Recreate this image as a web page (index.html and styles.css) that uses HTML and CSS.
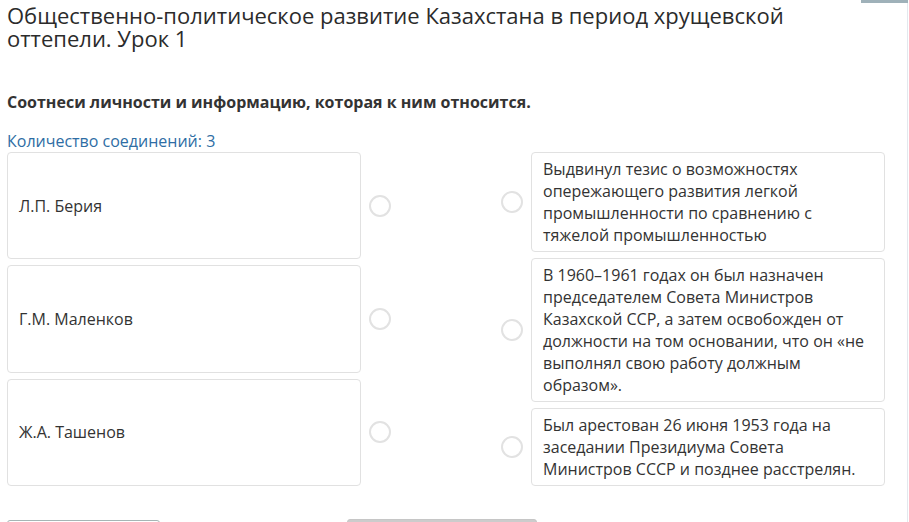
FILE: index.html
```
<!DOCTYPE html>
<html lang="ru">
<head>
<meta charset="utf-8">
<link rel="stylesheet" href="styles.css">
</head>
<body>
<div class="page">
  <div class="top-tab"></div>
  <h1 class="title">Общественно-политическое развитие Казахстана в период хрущевской оттепели. Урок 1</h1>
  <p class="task">Соотнеси личности и информацию, которая к ним относится.</p>
  <p class="count">Количество соединений: 3</p>
  <div class="match">
    <div class="col col-left">
      <div class="row"><div class="card card-left">Л.П. Берия</div><span class="dot"></span></div>
      <div class="row"><div class="card card-left">Г.М. Маленков</div><span class="dot"></span></div>
      <div class="row"><div class="card card-left">Ж.А. Ташенов</div><span class="dot"></span></div>
    </div>
    <div class="col col-right">
      <div class="row"><span class="dot"></span><div class="card card-right">Выдвинул тезис о возможностях опережающего развития легкой промышленности по сравнению с тяжелой промышленностью</div></div>
      <div class="row"><span class="dot"></span><div class="card card-right">В 1960–1961 годах он был назначен председателем Совета Министров Казахской ССР, а затем освобожден от должности на том основании, что он «не выполнял свою работу должным образом».</div></div>
      <div class="row"><span class="dot"></span><div class="card card-right">Был арестован 26 июня 1953 года на заседании Президиума Совета Министров СССР и позднее расстрелян.</div></div>
    </div>
  </div>
  <div class="buttons">
    <button class="btn btn-outline"></button>
    <button class="btn btn-grey"></button>
  </div>
</div>
</body>
</html>
```
FILE: styles.css
```
html, body {
  margin: 0;
  padding: 0;
  background: #fff;
}
body {
  font-family: "Open Sans", "Noto Sans", sans-serif;
  color: #333;
  overflow: hidden;
}
.page {
  position: relative;
  width: 900px;
  min-height: 600px;
  padding-left: 7px;
  border-right: 1px solid #e3e8ee;
}
.top-tab {
  position: absolute;
  right: -1px;
  top: 0;
  width: 47px;
  height: 3px;
  background: #9fb1b9;
}
.title {
  margin: 0;
  padding-top: 4px;
  font-size: 22px;
  line-height: 23px;
  font-weight: 400;
  color: #2b2b2b;
  width: 820px;
}
.task {
  margin: 42px 0 0;
  font-size: 16px;
  line-height: 20px;
  font-weight: 700;
  color: #333;
}
.count {
  margin: 19px 0 0;
  font-size: 16px;
  line-height: 20px;
  color: #2e6da4;
}
.match {
  display: grid;
  grid-template-columns: 384px 384px;
  column-gap: 110px;
  margin-top: 1px;
}
.col {
  display: flex;
  flex-direction: column;
  gap: 6px;
}
.col-left .row {
  flex: 1;
}
.row {
  display: flex;
  align-items: center;
  gap: 8px;
}
.card {
  box-sizing: border-box;
  border: 1px solid #e1e1e1;
  border-radius: 4px;
  font-size: 16px;
  line-height: 22px;
  color: #333;
}
.card-left {
  width: 354px;
  align-self: stretch;
  display: flex;
  align-items: center;
  padding: 0 11px;
}
.card-right {
  width: 354px;
  padding: 5px 11px;
}
.dot {
  flex: none;
  box-sizing: border-box;
  width: 22px;
  height: 22px;
  border: 2px solid #e2e2e2;
  border-radius: 50%;
}
.buttons {
  display: flex;
  align-items: flex-start;
  gap: 187px;
  margin-top: 33px;
}
.btn {
  font-family: inherit;
  font-size: 16px;
  height: 36px;
  border-radius: 3px;
  color: #555;
}
.btn-outline {
  width: 153px;
  margin-top: 1px;
  background: #fff;
  border: 1px solid #a6b5b5;
}
.btn-grey {
  width: 190px;
  background: #cccccc;
  border: 1px solid #c6c6c6;
}
```
